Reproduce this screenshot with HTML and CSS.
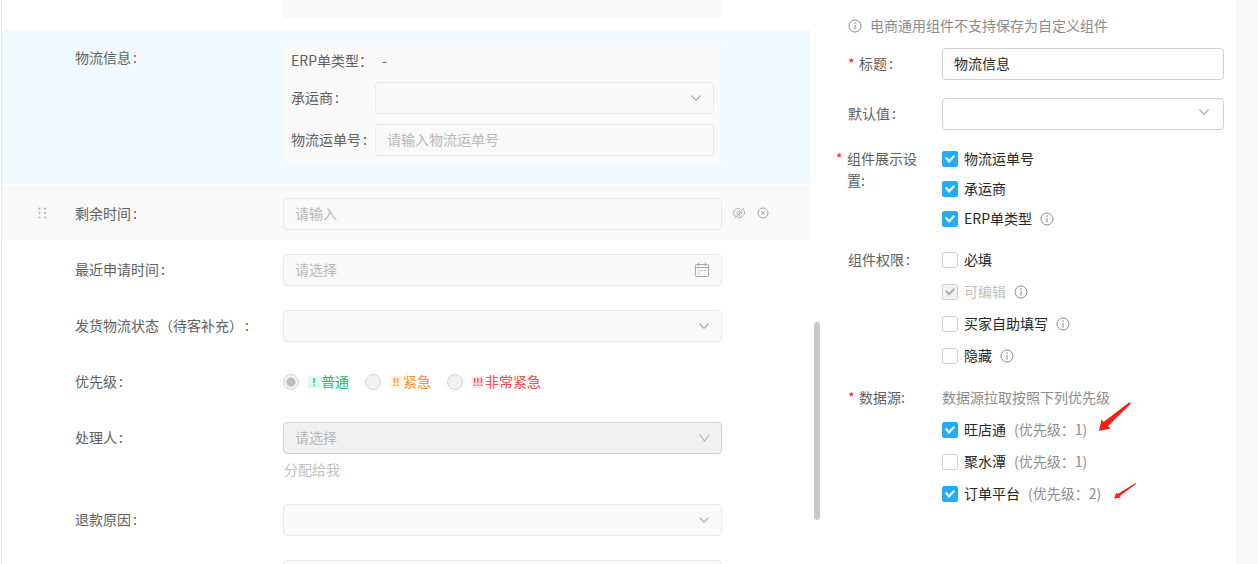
FILE: index.html
```html
<!DOCTYPE html>
<html lang="zh-CN">
<head>
<meta charset="utf-8">
<title>物流信息</title>
<link rel="stylesheet" href="styles.css">
</head>
<body>
<svg class="defs" aria-hidden="true">
  <symbol id="down" viewBox="0 0 12 12"><path d="M1.500 3.500L6 8.200l4.500-4.700" fill="none" stroke="currentColor" stroke-width="1.300"/></symbol>
  <symbol id="info" viewBox="0 0 14 14"><circle cx="7" cy="7" r="6" fill="none" stroke="currentColor"/><path d="M7 6v4.500" stroke="currentColor" stroke-width="1.100"/><circle cx="7" cy="4.100" r=".8" fill="currentColor"/></symbol>
</svg>
<div class="page">
  <main class="form">
    <div class="row">
      <span class="name"></span>
      <div class="stub"></div>
    </div>
    <div class="row selected">
      <span class="name">物流信息<i class="colon">:</i></span>
      <div class="group">
        <span class="sub">ERP单类型：</span><span class="sub dash">-</span>
        <label class="sub" for="carrier">承运商<i class="colon">:</i></label>
        <div class="control"><select id="carrier" disabled><option></option></select><svg class="chev"><use href="#down"/></svg></div>
        <label class="sub" for="waybill">物流运单号<i class="colon">:</i></label>
        <div class="control"><input id="waybill" type="text" placeholder="请输入物流运单号" disabled></div>
      </div>
    </div>
    <div class="row hovered">
      <svg class="grip" viewBox="0 0 9 12"><g fill="#b0b0b0"><circle cx="1.500" cy="1.500" r="1.100"/><circle cx="7" cy="1.500" r="1.100"/><circle cx="1.500" cy="6" r="1.100"/><circle cx="7" cy="6" r="1.100"/><circle cx="1.500" cy="10.500" r="1.100"/><circle cx="7" cy="10.500" r="1.100"/></g></svg>
      <label class="name" for="remain">剩余时间<i class="colon">:</i></label>
      <div class="control"><input id="remain" type="text" placeholder="请输入" disabled></div>
      <div class="tools">
        <button type="button" aria-label="隐藏"><svg viewBox="0 0 12 12"><g fill="none" stroke="#a3a3a3" stroke-width=".9"><path d="M6.800 1.700C3.500 1 .5 3 .5 6c0 1.600.8 2.900 2 3.700M10.200 2.600C12.700 5 11.600 10.200 6.200 10.400c-.8 0-1.500-.1-2.100-.3"/><path d="M7 3.900C5 3.500 3.700 5 3.900 7.300M8.300 5c.6 1.800-.4 3.400-2.600 3.500M1.600 11.300L11.300.7M4.900 8L7.500 5.200"/></g></svg></button>
        <button type="button" aria-label="删除"><svg viewBox="0 0 12 12"><g fill="none" stroke="#a3a3a3"><circle cx="6" cy="6" r="5"/><path d="M4.200 4.200l3.600 3.600M7.800 4.200L4.200 7.800"/></g></svg></button>
      </div>
    </div>
    <div class="row">
      <label class="name" for="applied">最近申请时间<i class="colon">:</i></label>
      <div class="control"><input id="applied" type="text" placeholder="请选择" disabled><svg class="cal" viewBox="0 0 16 16"><g fill="none" stroke="#a6a6a6"><rect x="1.500" y="2.500" width="13" height="12" rx=".8"/><path d="M1.500 5.500h13M4.500.8v3M11.500.8v3"/><path d="M4.300 8.500h1.400M7.300 8.500h1.400M10.300 8.500h1.400M4.300 11.500h1.400"/></g></svg></div>
    </div>
    <div class="row">
      <label class="name" for="status">发货物流状态（待客补充）<i class="colon">:</i></label>
      <div class="control"><select id="status" disabled><option></option></select><svg class="chev"><use href="#down"/></svg></div>
    </div>
    <div class="row">
      <span class="name">优先级<i class="colon">:</i></span>
      <div class="radios">
        <label class="normal"><input type="radio" name="level" checked disabled><b>!</b><span>普通</span></label>
        <label class="urgent"><input type="radio" name="level" disabled><b>!!</b><span>紧急</span></label>
        <label class="critical"><input type="radio" name="level" disabled><b>!!!</b><span>非常紧急</span></label>
      </div>
    </div>
    <div class="row">
      <label class="name" for="owner">处理人<i class="colon">:</i></label>
      <div>
        <div class="control strong"><select id="owner" disabled><option>请选择</option></select><svg class="chev" viewBox="0 0 12 12"><path d="M1.500 2.500L6.500 9l5-6.500" fill="none" stroke="currentColor" stroke-width="1.200"/></svg></div>
        <button class="assign" type="button" disabled>分配给我</button>
      </div>
    </div>
    <div class="row">
      <label class="name" for="reason">退款原因<i class="colon">:</i></label>
      <div class="control"><select id="reason" disabled><option></option></select><svg class="chev"><use href="#down"/></svg></div>
    </div>
    <div class="row">
      <span class="name"></span>
      <div class="control"><input type="text" aria-label="备注" disabled></div>
    </div>
    <div class="thumb"></div>
  </main>

  <aside class="settings">
    <p class="note"><svg class="info"><use href="#info"/></svg>电商通用组件不支持保存为自定义组件</p>
    <div class="item">
      <label class="key" for="title"><em>*</em><span>标题<i class="colon">:</i></span></label>
      <div class="control plain"><input id="title" type="text" value="物流信息"></div>
    </div>
    <div class="item">
      <label class="key" for="preset"><span>默认值<i class="colon">:</i></span></label>
      <div class="control plain"><select id="preset"><option></option></select><svg class="chev high"><use href="#down"/></svg></div>
    </div>
    <div class="item checks">
      <div class="key outdent"><em>*</em><span>组件展示设置:</span></div>
      <div class="list tight">
        <label><input type="checkbox" checked>物流运单号</label>
        <label><input type="checkbox" checked>承运商</label>
        <label><input type="checkbox" checked>ERP单类型<svg class="info"><use href="#info"/></svg></label>
      </div>
    </div>
    <div class="item checks">
      <div class="key"><span>组件权限<i class="colon">:</i></span></div>
      <div class="list">
        <label><input type="checkbox">必填</label>
        <label class="off"><input type="checkbox" checked disabled>可编辑<svg class="info"><use href="#info"/></svg></label>
        <label><input type="checkbox">买家自助填写<svg class="info"><use href="#info"/></svg></label>
        <label><input type="checkbox">隐藏<svg class="info"><use href="#info"/></svg></label>
      </div>
    </div>
    <div class="item checks">
      <div class="key"><em>*</em><span>数据源:</span></div>
      <div class="list">
        <span class="hint">数据源拉取按照下列优先级</span>
        <label><input type="checkbox" checked>旺店通<span class="rank">(优先级：1)<svg class="arrow big" viewBox="0 0 34 32"><path d="M1 30L3.500 18.500L5.500 21L31 1.500Q33 1 32.500 3L10 25L12.500 27.500Z" fill="#fb1d12"/></svg></span></label>
        <label><input type="checkbox">聚水潭<span class="rank">(优先级：1)</span></label>
        <label><input type="checkbox" checked>订单平台<span class="rank">(优先级：2)<svg class="arrow small" viewBox="0 0 24 18"><path d="M1 16.500L3.300 10.500L4.700 12L22.500 1L23 2L6.500 14L8 15.500Z" fill="#fb1d12"/></svg></span></label>
      </div>
    </div>
  </aside>
  <div class="edge"></div>
</div>
</body>
</html>
```
FILE: styles.css
```css
* { box-sizing: border-box; }
body {
  margin: 0;
  overflow: hidden;
  background: #fff;
  color: #606060;
  font: 14px/22px "Noto Sans CJK SC", sans-serif;
}
input, select, button { font: inherit; color: inherit; margin: 0; }
i, em { font-style: normal; }
.defs { position: absolute; width: 0; height: 0; }
.page {
  display: grid;
  grid-template-columns: minmax(0, 1fr) 416px 22px;
  height: 100vh;
  overflow: hidden;
}
.colon { margin-left: 2px; }

/* form canvas */
.form {
  position: relative;
  margin-left: 1px;
  padding-right: 10px;
  border-left: 1px solid #e8e8e8;
  overflow: hidden;
}
.row {
  position: relative;
  display: grid;
  grid-template-columns: 208px minmax(0, 1fr) 88px;
  align-items: start;
  padding: 12px 0 10px 73px;
  margin-bottom: 2px;
}
.row:first-child { padding-top: 0; }
.stub { height: 18px; background: #f9f9f9; border-radius: 0 0 4px 4px; }
.name { line-height: 30px; white-space: nowrap; }
.row:first-child .name { line-height: 18px; }
.selected { background: #f0f9ff; padding-bottom: 20px; }
.hovered { background: #f9f9f9; }
.group {
  display: grid;
  grid-template-columns: 84px minmax(0, 1fr);
  row-gap: 10px;
  align-items: center;
  padding: 8px;
  background: #f9f9f9;
  border-radius: 4px;
}
.sub { line-height: 20px; padding-bottom: 2px; white-space: nowrap; }
.dash { padding-left: 7px; }
.grip { position: absolute; left: 36px; top: 21px; width: 9px; height: 12px; }
.tools { display: flex; gap: 12px; padding: 9px 0 0 11px; }
.tools button { display: flex; padding: 0; border: 0; background: none; }
.tools svg { width: 12px; height: 12px; }
.thumb {
  position: absolute;
  right: 0;
  top: 322px;
  width: 6px;
  height: 198px;
  border-radius: 3px;
  background: #c9c9c9;
}

/* text boxes and drop-downs */
.control { position: relative; }
.control input, .control select {
  display: block;
  width: 100%;
  height: 32px;
  padding: 0 11px 2px;
  border: 1px solid #e8e8e8;
  border-radius: 4px;
  background: #f9f9f9;
  color: #b8b8b8;
  opacity: 1;
  appearance: none;
}
.control input::placeholder { color: #b8b8b8; }
.strong select { background: #f2f2f2; border-color: #d0d0d0; }
.plain input, .plain select { background: #fff; border-color: #d0d0d0; color: #262626; }
.chev {
  position: absolute;
  right: 12px;
  top: 10px;
  width: 12px;
  height: 12px;
  color: #b3b3b3;
  pointer-events: none;
}
.high { right: 14px; top: 8px; }
.cal { position: absolute; right: 12px; top: 8px; width: 16px; height: 16px; }
.assign { display: block; height: 26px; padding: 4px 1px 0; border: 0; background: none; color: #bfbfbf; }

/* priority radios */
.radios { display: flex; gap: 16px; height: 32px; align-items: center; }
.radios label { display: flex; align-items: center; }
.radios input {
  width: 16px;
  height: 16px;
  border: 1px solid #d4d4d4;
  border-radius: 50%;
  background: #f2f2f2;
  appearance: none;
}
.radios input:checked { background: radial-gradient(circle, #bdbdbd 4px, #f2f2f2 5px); }
.radios b {
  width: 12px;
  height: 12px;
  margin: 0 1px 0 9px;
  font: bold 10px/13px "Liberation Sans", sans-serif;
  text-align: center;
}
.radios span { padding-bottom: 2px; }
.normal { color: #19be6b; }
.normal b { background: #e3f8ed; }
.urgent { color: #fa8c35; }
.urgent b { background: #fff3d9; }
.critical { color: #fb4650; }
.critical b { background: #ffe9ea; }

/* settings panel */
.settings { padding: 14px 12px 0 28px; }
.note { display: flex; align-items: center; gap: 8px; margin: 0 0 12px; color: #8c8c8c; }
.info { flex: none; width: 14px; height: 14px; margin-top: 2px; color: #8c8c8c; }
.item { display: grid; grid-template-columns: 94px minmax(0, 1fr); margin-bottom: 18px; }
.key { display: flex; line-height: 30px; }
.key em { width: 11px; flex: none; color: #f5222d; }
.outdent { margin: 0 24px 0 -12px; }
.checks { margin: -1px 0 21px; }
.checks .key { line-height: 22px; }
.list { display: flex; flex-direction: column; gap: 10px; }
.tight { gap: 8px; margin-bottom: -1px; }
.list label { display: flex; align-items: center; color: #262626; }
.list .info { margin-left: 8px; }
.list input {
  position: relative;
  width: 16px;
  height: 16px;
  margin: 2px 6px 0 0;
  border: 1px solid #d0d0d0;
  border-radius: 2px;
  background: #fff;
  appearance: none;
}
.list input:checked { background: #22acfa; border-color: #22acfa; }
.list input:checked::after {
  content: "";
  position: absolute;
  left: 2px;
  top: 3px;
  width: 10px;
  height: 8px;
  background: #fff;
  clip-path: polygon(0 42%, 15% 23%, 40% 58%, 85% 0, 100% 19%, 40% 100%);
}
.list .off { color: #bfbfbf; }
.list input:disabled { background: #f2f2f2; border-color: #d0d0d0; }
.list input:disabled::after { background: #b0b0b0; }
.hint { color: #8c8c8c; }
.rank { position: relative; margin-left: 8px; color: #8c8c8c; }
.arrow { position: absolute; left: 100%; }
.big { width: 34px; height: 32px; margin-left: 11px; bottom: 7px; }
.small { width: 24px; height: 18px; margin-left: 12px; bottom: 4px; }
.edge { background: #f8f8f8; }
```
